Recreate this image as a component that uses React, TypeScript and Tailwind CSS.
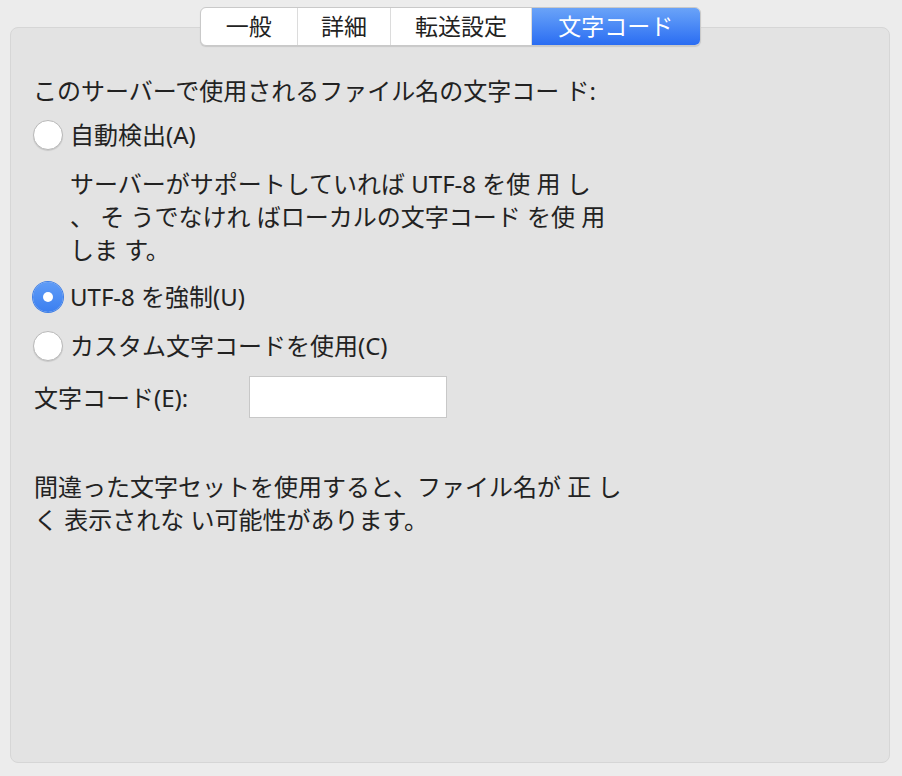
const font = { fontFamily: '"Noto Sans", "Noto Sans CJK JP", sans-serif' };

function Radio({ checked }: { checked?: boolean }) {
  if (checked) {
    return (
      <span className="flex h-[30px] w-[30px] shrink-0 items-center justify-center rounded-full bg-gradient-to-b from-[#5f9cf7] to-[#3b7ff0] shadow-[0_0_0_1px_#3f7fe6]">
        <span className="h-[10px] w-[10px] rounded-full bg-white" />
      </span>
    );
  }
  return (
    <span className="h-[30px] w-[30px] shrink-0 rounded-full border border-[#b9b9b9] bg-white shadow-[0_1px_1px_rgba(0,0,0,0.12)]" />
  );
}

const tabs = ["一般", "詳細", "転送設定", "文字コード"];
const tabWidths = ["w-[97px]", "w-[94px]", "w-[141px]", "w-[169px]"];

export default function App() {
  return (
    <div
      className="flex h-[776px] w-[902px] flex-col bg-[#ececec] pt-[7px] text-[24px] text-[#222]"
      style={font}
    >
      <div className="relative z-10 ml-[200px] flex h-[39px] w-[501px] overflow-hidden rounded-[6px] border border-[#c9c9c9] bg-white text-[23px] shadow-[0_1px_1px_rgba(0,0,0,0.12)]">
        {tabs.map((t, i) => (
          <div
            key={t}
            className={
              i === 3
                ? `${tabWidths[i]} flex items-center justify-center bg-gradient-to-b from-[#6aa3f8] to-[#2a6cf2] text-white`
                : `${tabWidths[i]} flex items-center justify-center border-r border-[#dcdcdc] text-[#222]`
            }
          >
            {t}
          </div>
        ))}
      </div>

      <div className="ml-[10px] -mt-[19px] flex h-[736px] w-[880px] flex-col rounded-[8px] border border-[#d6d6d6] bg-[#e3e3e3] pl-[22px] pt-[46px] leading-[33px]">
        <div>このサーバーで使用されるファイル名の文字コー ド:</div>

        <div className="mt-[11px] flex items-center gap-[7px]">
          <Radio />
          <span>自動検出(A)</span>
        </div>

        <div className="mt-[16px] pl-[37px]">
          <div>サーバーがサポートしていれば UTF-8 を使 用 し</div>
          <div>、 そ うでなけれ ばローカルの文字コード を使 用</div>
          <div>しま す。</div>
        </div>

        <div className="mt-[14px] flex items-center gap-[7px]">
          <Radio checked />
          <span>UTF-8 を強制(U)</span>
        </div>

        <div className="mt-[16px] flex items-center gap-[7px]">
          <Radio />
          <span>カスタム文字コードを使用(C)</span>
        </div>

        <div className="mt-[14px] flex items-center">
          <span className="w-[216px] pl-[1px]">文字コード(E):</span>
          <div className="h-[42px] w-[198px] border border-[#c8c8c8] bg-white" />
        </div>

        <div className="mt-[52px] pl-[1px]">
          <div>間違った文字セットを使用すると、ファイル名が 正 し</div>
          <div>く 表示されな い可能性があります。</div>
        </div>
      </div>
    </div>
  );
}
